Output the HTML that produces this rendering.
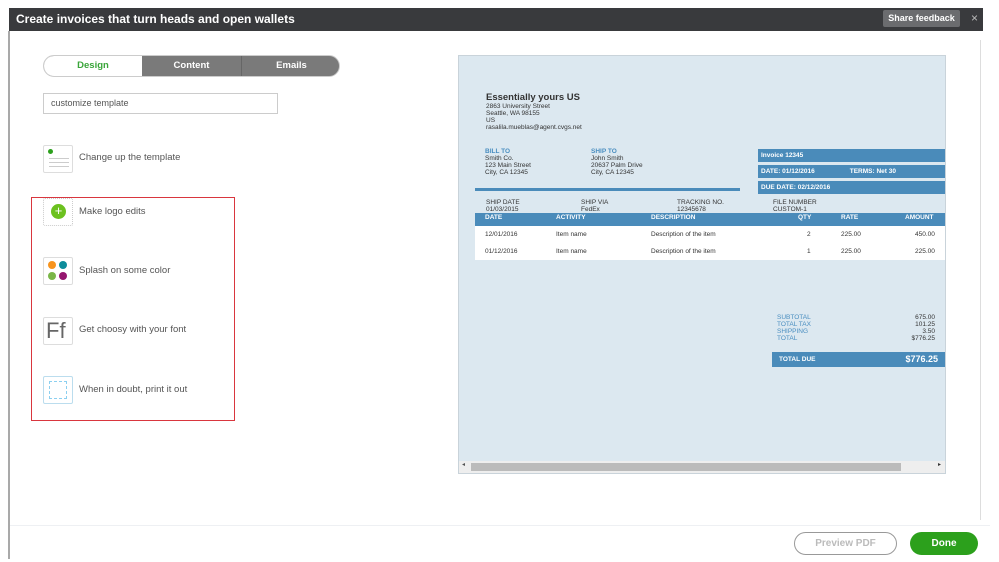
<!DOCTYPE html>
<html><head><style>
*{margin:0;padding:0;box-sizing:border-box}
body{width:999px;height:562px;background:#fff;position:relative;overflow:hidden;font-family:"Liberation Sans",Arial,sans-serif;color:#444}
.a{position:absolute}
.hd{left:9px;top:8px;width:974px;height:23px;background:#393a3d;color:#fff;font-weight:bold;font-size:12px;line-height:22px;padding-left:7px}
.sf{left:883px;top:10px;width:77px;height:17px;background:#6b6c6f;color:#fff;font-size:9px;font-weight:bold;text-align:center;line-height:17px;border-radius:2px}
.lb{left:8px;top:31px;width:2px;height:528px;background:#a9a9a9}
.t{font-size:9.5px;color:#555}
.ic{width:30px;height:28px;border:1px solid #ddd;border-radius:2px;background:#fff}
.pv{left:458px;top:55px;width:488px;height:419px;background:#dce8f0;border:1px solid #c9d3da}
.s{font-size:6.5px;color:#333;line-height:7px}
.bl{color:#4a8ec0;font-weight:bold}
.bar{background:#4a8bba;color:#fff;font-weight:bold;font-size:6.5px}
</style></head><body>
<div class="a hd">Create invoices that turn heads and open wallets</div>
<div class="a sf">Share feedback</div>
<div class="a" style="left:971px;top:11px;color:#bbb;font-size:12px">×</div>
<div class="a lb"></div>
<div class="a" style="left:980px;top:40px;width:1px;height:480px;background:#ddd"></div>
<div class="a" style="left:43px;top:55px;width:297px;height:22px;border:1px solid #ccc;border-radius:11px;overflow:hidden;background:#7a7a7a">
<div class="a" style="left:0;top:0;width:98px;height:22px;background:#fff;color:#3aa53a;font-weight:bold;font-size:9.5px;text-align:center;line-height:20px">Design</div>
<div class="a" style="left:98px;top:0;width:100px;height:22px;color:#fff;font-weight:bold;font-size:9.5px;text-align:center;line-height:20px;border-right:1px solid #666">Content</div>
<div class="a" style="left:198px;top:0;width:99px;height:22px;color:#fff;font-weight:bold;font-size:9.5px;text-align:center;line-height:20px">Emails</div>
</div>
<div class="a t" style="left:43px;top:93px;width:235px;height:21px;border:1px solid #ccc;padding-left:7px;line-height:19px;font-size:9px">customize template</div>
<div class="a ic" style="left:43px;top:145px"><div class="a" style="left:4px;top:3px;width:5px;height:5px;border-radius:50%;background:#2ca01c"></div><div class="a" style="left:5px;top:12px;width:20px;height:1px;background:#ccc;box-shadow:0 4px 0 #ccc,0 8px 0 #ccc"></div></div>
<div class="a t" style="left:79px;top:152px">Change up the template</div>
<div class="a" style="left:31px;top:197px;width:204px;height:224px;border:1px solid #d9363e"></div>
<div class="a ic" style="left:43px;top:198px;border:1px dotted #ccc"><div class="a" style="left:7px;top:5px;width:15px;height:15px;border-radius:50%;background:#6cc11f;color:#fff;font-size:13px;line-height:14px;text-align:center">+</div></div>
<div class="a t" style="left:79px;top:206px">Make logo edits</div>
<div class="a ic" style="left:43px;top:257px">
<div class="a" style="left:4px;top:3px;width:8px;height:8px;border-radius:50%;background:#f7941e"></div>
<div class="a" style="left:15px;top:3px;width:8px;height:8px;border-radius:50%;background:#0e8c9a"></div>
<div class="a" style="left:4px;top:14px;width:8px;height:8px;border-radius:50%;background:#7ab648"></div>
<div class="a" style="left:15px;top:14px;width:8px;height:8px;border-radius:50%;background:#95166e"></div></div>
<div class="a t" style="left:79px;top:265px">Splash on some color</div>
<div class="a ic" style="left:43px;top:317px;font-size:22px;color:#666;line-height:26px;padding-left:2px">Ff</div>
<div class="a t" style="left:79px;top:324px">Get choosy with your font</div>
<div class="a ic" style="left:43px;top:376px;border-color:#bde"><div class="a" style="left:5px;top:4px;width:18px;height:18px;border:1px dashed #8cd0f0"></div></div>
<div class="a t" style="left:79px;top:384px">When in doubt, print it out</div>
<div class="a pv">
<div class="a" style="left:27px;top:36px;font-size:9.5px;font-weight:bold;color:#333">Essentially yours US</div>
<div class="a s" style="left:27px;top:47px">2863 University Street<br>Seattle, WA 98155<br>US<br>rasalila.mueblas@agent.cvgs.net</div>
<div class="a s" style="left:26px;top:92px"><span class="bl">BILL TO</span><br>Smith Co.<br>123 Main Street<br>City, CA 12345</div>
<div class="a s" style="left:132px;top:92px"><span class="bl">SHIP TO</span><br>John Smith<br>20637 Palm Drive<br>City, CA 12345</div>
<div class="a" style="left:16px;top:132px;width:265px;height:3px;background:#4a8bba"></div>
<div class="a bar" style="left:299px;top:93px;width:187px;height:13px;line-height:13px;padding-left:3px">Invoice 12345</div>
<div class="a bar" style="left:299px;top:109px;width:187px;height:13px;line-height:13px;padding-left:3px">DATE: 01/12/2016<span style="margin-left:35px">TERMS: Net 30</span></div>
<div class="a bar" style="left:299px;top:125px;width:187px;height:13px;line-height:13px;padding-left:3px">DUE DATE: 02/12/2016</div>
<div class="a s" style="left:27px;top:143px">SHIP DATE<br>01/03/2015</div>
<div class="a s" style="left:122px;top:143px">SHIP VIA<br>FedEx</div>
<div class="a s" style="left:218px;top:143px">TRACKING NO.<br>12345678</div>
<div class="a s" style="left:314px;top:143px">FILE NUMBER<br>CUSTOM-1</div>
<div class="a" style="left:16px;top:157px;width:470px;height:47px;background:#fff"></div>
<div class="a bar" style="left:16px;top:157px;width:470px;height:13px;line-height:9px">
<span class="a" style="left:10px">DATE</span><span class="a" style="left:81px">ACTIVITY</span><span class="a" style="left:176px">DESCRIPTION</span><span class="a" style="left:323px">QTY</span><span class="a" style="left:366px">RATE</span><span class="a" style="left:430px">AMOUNT</span></div>
<div class="a s" style="left:26px;top:175px;width:460px"><span class="a">12/01/2016</span><span class="a" style="left:71px">Item name</span><span class="a" style="left:166px">Description of the item</span><span class="a" style="left:322px">2</span><span class="a" style="left:356px">225.00</span><span class="a" style="left:430px">450.00</span></div>
<div class="a s" style="left:26px;top:192px;width:460px"><span class="a">01/12/2016</span><span class="a" style="left:71px">Item name</span><span class="a" style="left:166px">Description of the item</span><span class="a" style="left:322px">1</span><span class="a" style="left:356px">225.00</span><span class="a" style="left:430px">225.00</span></div>
<div class="a s" style="left:318px;top:258px;color:#4a8ec0">SUBTOTAL<br>TOTAL TAX<br>SHIPPING<br>TOTAL</div>
<div class="a s" style="left:440px;top:258px;text-align:right;width:36px">675.00<br>101.25<br>3.50<br>$776.25</div>
<div class="a bar" style="left:313px;top:296px;width:173px;height:15px;line-height:15px;padding:0 7px">TOTAL DUE<span style="float:right;font-size:9px">$776.25</span></div>
<div class="a" style="left:0;top:405px;width:486px;height:12px;background:#eee"><div class="a" style="left:12px;top:2px;width:430px;height:8px;background:#bbb"></div><div class="a" style="left:3px;top:0;font-size:6px;color:#555">◂</div><div class="a" style="right:4px;top:0;font-size:6px;color:#333">▸</div></div>
</div>
<div class="a" style="left:10px;top:525px;width:980px;height:1px;background:#eef0f3"></div>
<div class="a" style="left:794px;top:532px;width:103px;height:23px;border:1px solid #999;border-radius:12px;color:#bbb;font-weight:bold;font-size:10px;text-align:center;line-height:21px">Preview PDF</div>
<div class="a" style="left:910px;top:532px;width:68px;height:23px;background:#2ca01c;border-radius:12px;color:#fff;font-weight:bold;font-size:10px;text-align:center;line-height:23px">Done</div>
</body></html>
